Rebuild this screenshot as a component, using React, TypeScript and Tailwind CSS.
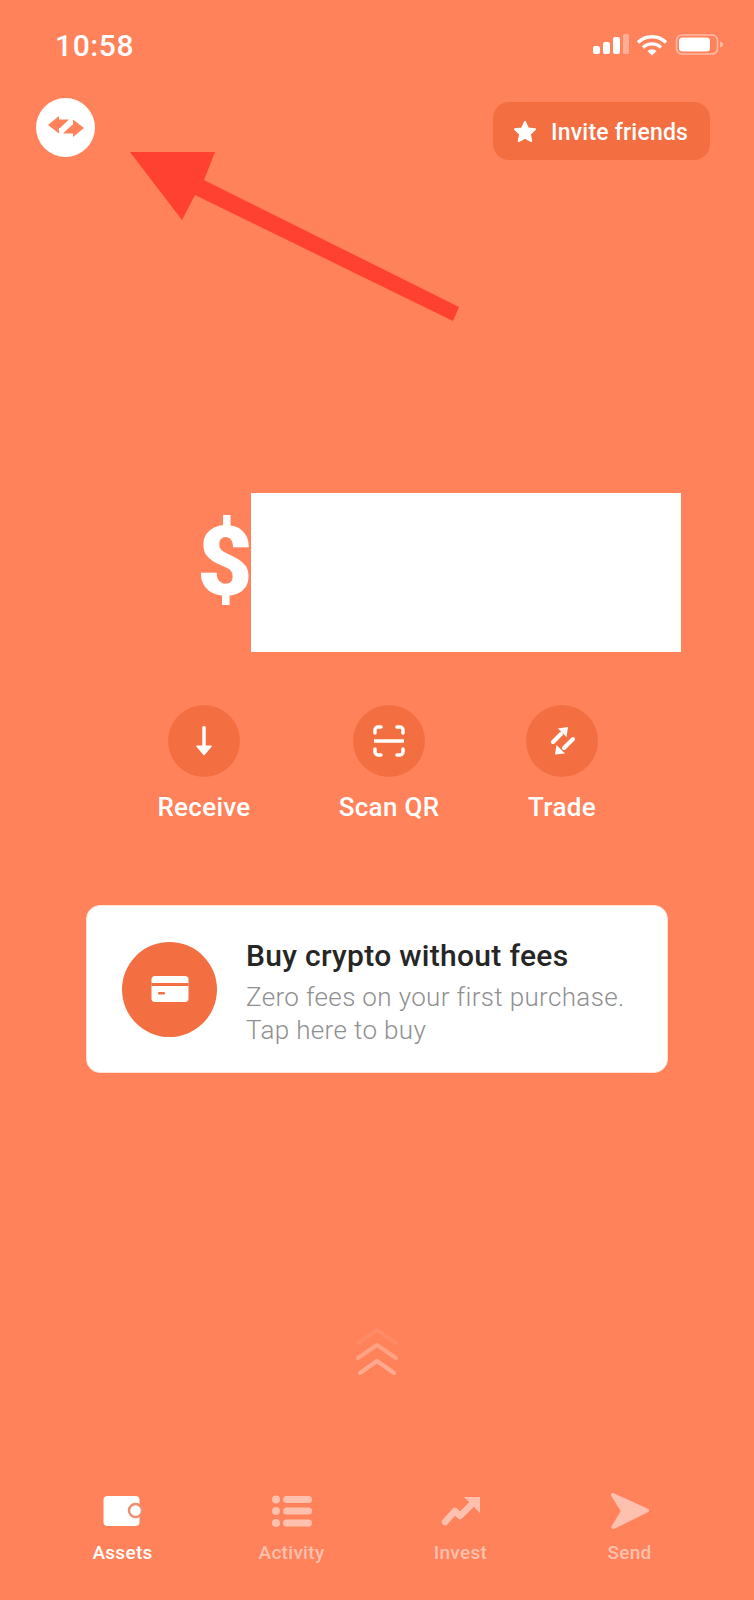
import React from 'react'

const font = { fontFamily: 'Roboto, "Liberation Sans", sans-serif' }

function StatusIcons() {
  return (
    <svg width="131" height="22" viewBox="0 0 131 22" fill="white">
      <rect x="0" y="12" width="7" height="8" rx="2" />
      <rect x="10" y="8" width="7" height="12" rx="2" />
      <rect x="20" y="3" width="7" height="17" rx="2" />
      <rect x="30" y="0" width="6" height="20" rx="1.500" opacity="0.35" />
      <path d="M45 8.500a20 20 0 0 1 28 0" fill="none" stroke="white" strokeWidth="3.400" />
      <path d="M50 13.500a13 13 0 0 1 18 0" fill="none" stroke="white" strokeWidth="3.400" />
      <path d="M54.500 17a6.500 6.500 0 0 1 9 0L59 21.500z" />
      <rect x="83.500" y="1" width="41" height="19" rx="5.500" fill="none" stroke="white" strokeOpacity="0.45" strokeWidth="1.600" />
      <rect x="86" y="3.500" width="31" height="14" rx="3.500" />
      <path d="M127 7.500c2 .6 3 1.600 3 3s-1 2.400-3 3z" opacity="0.45" />
    </svg>
  )
}

function SwapLogo() {
  return (
    <svg className="mb-[3px]" width="36" height="21" viewBox="0 0 36 21" fill="#ff825b">
      <path d="M0 9 11 0v3.500h10L12 12h-1v5.500z" />
      <path d="M36 12 25 21v-3.500H15L24 9h1V3.500z" />
    </svg>
  )
}

function ReceiveIcon() {
  return (
    <svg width="30" height="32" viewBox="0 0 30 32" fill="white">
      <rect x="13.250" y="1" width="3.500" height="22" rx="1.500" />
      <path d="M8 20.500h14a.8.8 0 0 1 .6 1.300L15.500 30a.7.7 0 0 1-1 0l-7.100-8.200a.8.8 0 0 1 .6-1.300z" />
    </svg>
  )
}

function ScanIcon() {
  return (
    <svg width="32" height="32" viewBox="0 0 32 32" fill="none" stroke="white" strokeWidth="3.500" strokeLinecap="round">
      <path d="M2 8V5a3 3 0 0 1 3-3h3" />
      <path d="M24 2h3a3 3 0 0 1 3 3v3" />
      <path d="M2 24v3a3 3 0 0 0 3 3h3" />
      <path d="M24 30h3a3 3 0 0 0 3-3v-3" />
      <path d="M1 16h30" strokeLinecap="butt" />
    </svg>
  )
}

function TradeIcon() {
  return (
    <svg width="32" height="32" viewBox="0 0 32 32" fill="white">
      <path d="M7 17 15 9" stroke="white" strokeWidth="4" strokeLinecap="round" />
      <path d="M22 2 12 3.500 20.500 12z" />
      <path d="M27 14 18 23" stroke="white" strokeWidth="4" strokeLinecap="round" />
      <path d="M9 29.500 19 28.500 10.500 20z" />
    </svg>
  )
}

function CardIcon() {
  return (
    <svg width="38" height="28" viewBox="0 0 38 28">
      <rect x="0.500" y="1" width="37" height="26" rx="3.500" fill="white" />
      <rect x="0.500" y="8" width="37" height="3" fill="#f36f41" />
      <rect x="7" y="17" width="7" height="2.500" rx="1.200" fill="#f36f41" />
    </svg>
  )
}

function Chevrons() {
  return (
    <svg width="44" height="50" viewBox="0 0 44 50" fill="none" stroke="white" strokeWidth="4" strokeLinecap="round" strokeLinejoin="round">
      <path d="M3 16 22 3l19 13" strokeOpacity="0.07" />
      <path d="M3 31 22 18l19 13" strokeOpacity="0.25" />
      <path d="M5 46 22 34l17 12" strokeOpacity="0.32" />
    </svg>
  )
}

function WalletIcon() {
  return (
    <svg width="40" height="32" viewBox="0 0 40 32">
      <rect x="0.500" y="1" width="36" height="30" rx="4" fill="white" />
      <rect x="26" y="9" width="13" height="13" rx="6.500" fill="white" stroke="#ee8f70" strokeWidth="2.500" />
    </svg>
  )
}

function ListIcon() {
  return (
    <svg width="40" height="32" viewBox="0 0 40 32" fill="white" opacity="0.5">
      <circle cx="4" cy="4.500" r="4" />
      <circle cx="4" cy="16" r="4" />
      <circle cx="4" cy="28" r="4" />
      <rect x="11" y="1" width="29" height="7" rx="3.500" />
      <rect x="11" y="12.500" width="29" height="7" rx="3.500" />
      <rect x="11" y="24.500" width="29" height="7" rx="3.500" />
    </svg>
  )
}

function InvestIcon() {
  return (
    <svg width="40" height="32" viewBox="0 0 40 32" fill="white" opacity="0.5">
      <path d="M4 27 14 16l5 5 12-12" fill="none" stroke="white" strokeWidth="6.500" strokeLinecap="round" strokeLinejoin="round" />
      <path d="M23 2h16v16z" />
    </svg>
  )
}

function SendIcon() {
  return (
    <svg width="40" height="38" viewBox="0 0 40 38" fill="white" opacity="0.5" stroke="white" strokeWidth="4" strokeLinejoin="round">
      <path d="M3 3 37 18.500 3.500 35 13 19z" />
    </svg>
  )
}

const actions = [
  { label: 'Receive', icon: <ReceiveIcon /> },
  { label: 'Scan QR', icon: <ScanIcon /> },
  { label: 'Trade', icon: <TradeIcon /> },
]

const tabs = [
  { label: 'Assets', icon: <WalletIcon />, active: true },
  { label: 'Activity', icon: <ListIcon />, active: false },
  { label: 'Invest', icon: <InvestIcon />, active: false },
  { label: 'Send', icon: <SendIcon />, active: false },
]

export default function App() {
  return (
    <div className="relative flex h-[1600px] w-[754px] flex-col overflow-hidden bg-[#ff825b] text-white" style={font}>
      <div className="flex h-[90px] items-center justify-between pl-[55px] pr-[30px]">
        <span className="text-[30px] font-medium tracking-[0.6px]">10:58</span>
        <StatusIcons />
      </div>

      <div className="flex items-start justify-between pl-[36px] pr-[44px] pt-[8px]">
        <div className="flex h-[59px] w-[59px] items-center justify-center rounded-full bg-white">
          <SwapLogo />
        </div>
        <div className="mt-[4px] flex h-[58px] w-[217px] items-center gap-[14px] rounded-[16px] bg-[#f36f41] pl-[20px]">
          <svg className="mt-[2px]" width="24" height="24" viewBox="0 0 24 24" fill="white" stroke="white" strokeWidth="2" strokeLinejoin="round">
            <path d="m12 2 3 6.400 7 .9-5.100 4.800 1.300 6.900L12 17.600 5.800 21l1.300-6.900L2 9.300l7-.9z" />
          </svg>
          <span className="mt-[4px] text-[23px] font-medium tracking-[0.2px]">Invite friends</span>
        </div>
      </div>

      <div className="mt-[333px] flex h-[159px] pl-[197px]">
        <span className="mt-[21px] w-[54px] text-[96px] font-black leading-none">$</span>
        <div className="z-10 h-full w-[430px] bg-white" />
      </div>

      <div className="mt-[53px] flex gap-[53px] pl-[144px]">
        {actions.map((action, i) => (
          <div key={action.label} className={`flex w-[120px] flex-col items-center ${i === 0 ? 'mr-[12px]' : ''}`}>
            <div className="flex h-[72px] w-[72px] items-center justify-center rounded-full bg-[#f36f41]">
              {action.icon}
            </div>
            <span className="mt-[15px] text-[26px] font-medium leading-[30px] tracking-[0.3px] whitespace-nowrap">{action.label}</span>
          </div>
        ))}
      </div>

      <div className="ml-[86px] mt-[83px] flex h-[168px] w-[582px] items-center rounded-[14px] border border-[#ffe3d9] bg-white pl-[35px]">
        <div className="flex h-[95px] w-[95px] items-center justify-center rounded-full bg-[#f36f41]">
          <CardIcon />
        </div>
        <div className="ml-[29px] mt-[7px]">
          <div className="text-[30px] font-medium leading-[34px] tracking-[0.3px] text-[#262626]">Buy crypto without fees</div>
          <div className="mt-[8px] text-[26px] font-light leading-[33px] tracking-[0.35px] text-[#8f8f8f]">
            Zero fees on your first purchase.
            <br />
            Tap here to buy
          </div>
        </div>
      </div>

      <div className="mt-[254px] flex justify-center">
        <Chevrons />
      </div>

      <div className="mt-[115px] grid grid-cols-[repeat(4,169px)] pl-[38px]">
        {tabs.map((tab) => (
          <div key={tab.label} className="flex flex-col items-center">
            <div className="flex h-[38px] items-center justify-center">{tab.icon}</div>
            <span className={`mt-[10px] text-[19px] font-medium leading-[26px] tracking-[0.3px] ${tab.active ? 'text-white' : 'text-white/50'}`}>
              {tab.label}
            </span>
          </div>
        ))}
      </div>

      {/* red annotation arrow drawn on top of the screenshot */}
      <svg className="absolute left-0 top-0" width="754" height="340" viewBox="0 0 754 340" fill="#ff4131">
        <path d="M130 152h85l-11 28 255 127-6 14-258-126-13 25z" />
      </svg>
    </div>
  )
}
